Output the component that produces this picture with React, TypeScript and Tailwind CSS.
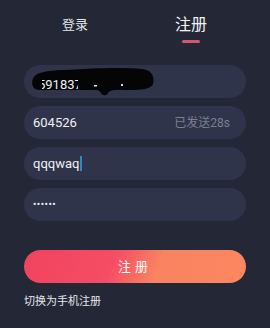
import React from "react";

const font = { fontFamily: '"Roboto", "Noto Sans CJK SC", sans-serif' };

function Field({ children, className = "" }: { children?: React.ReactNode; className?: string }) {
  return (
    <div
      className={`relative flex h-[33px] items-center rounded-full bg-[#30344a] pl-[9px] pr-[16px] text-[13px] text-[#eef0f4] ${className}`}
    >
      {children}
    </div>
  );
}

export default function App() {
  return (
    <div className="h-[328px] w-[270px] overflow-hidden bg-[#242836]" style={font}>
      <div className="flex h-[65px] pl-[20px]">
        <div className="flex w-[110px] flex-col items-center pt-[16px]">
          <span className="text-[13px] leading-[18px] text-[#e4e6ea]">登录</span>
        </div>
        <div className="flex w-[122px] flex-col items-center pt-[14px]">
          <span className="text-[16px] leading-[21px] text-[#f2f3f5]">注册</span>
          <span className="mt-[5px] h-[3px] w-[18px] rounded-full bg-[#d8566d]" />
        </div>
      </div>

      <div className="flex flex-col gap-2 px-[24px]">
        <Field>
          {/* redaction scribble */}
          <svg
            className="pointer-events-none absolute left-0 top-0"
            width="222"
            height="33"
            viewBox="0 0 222 33"
          >
            <path
              d="M9 14 C10 8 20 6 40 5 C70 3 100 2 118 4 C128 5 131 12 129 19 C127 24 118 25 104 25 C90 24 86 25 84 28 C83 31 78 31 77 28 C76 25 72 24 66 25 C50 25 30 25 16 25 C9 25 7 20 9 14 Z"
              fill="#050505"
            />
          </svg>
          <span className="relative z-10 pl-[5px] pt-[6px]">591837</span>
          <svg
            className="pointer-events-none absolute left-0 top-0 z-20"
            width="222"
            height="33"
            viewBox="0 0 222 33"
          >
            <path d="M10 14 C11 8 20 6 40 5 L70 5 L70 15 L10 15 Z" fill="#050505" />
            <path d="M9 13 L18 13 L18 24 L12 24 C9 22 8 17 9 13 Z" fill="#050505" />
            <path d="M54 14 L110 13 L110 24.5 L54 24.5 Z" fill="#050505" />
            <rect x="70" y="20" width="3" height="1.5" fill="#e8e8e8" />
            <rect x="97" y="19" width="2" height="2" fill="#d8d8d8" />
          </svg>
        </Field>
        <Field className="justify-between">
          <span>604526</span>
          <span className="text-[12px] text-[#7b8090]">已发送28s</span>
        </Field>
        <Field>
          <span>qqqwaq</span>
          <span className="ml-[1px] h-[15px] w-[2px] bg-[#2f86c8]" />
        </Field>
        <Field>
          <span className="text-[10px] tracking-[0.5px]">••••••</span>
        </Field>

        <button className="mt-[21px] flex h-[33px] items-center justify-center rounded-full bg-[linear-gradient(112deg,#f1435f_0%,#f54d64_40%,#fa8361_60%,#fb8760_100%)] text-[13px] tracking-[4px] text-white">
          注册
        </button>

        <div className="mt-[3px] text-[11px] leading-[16px] text-[#e6e7ea]">切换为手机注册</div>
      </div>
    </div>
  );
}
